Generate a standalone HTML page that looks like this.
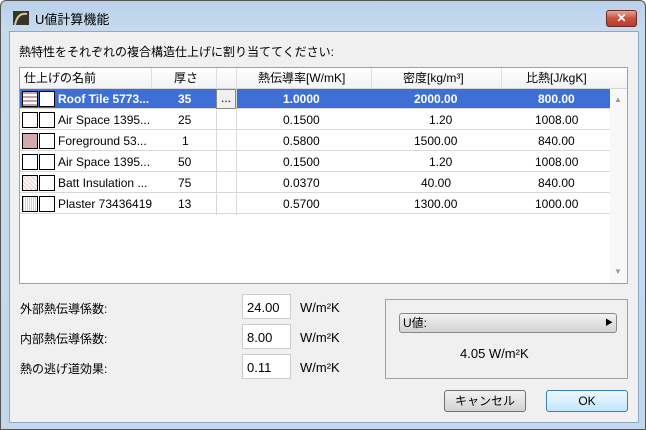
<!DOCTYPE html>
<html><head><meta charset="utf-8"><style>
*{margin:0;padding:0;box-sizing:border-box}
body{width:646px;height:430px;overflow:hidden;font-family:"Liberation Sans","Noto Sans CJK JP",sans-serif;font-size:12px;color:#000;background:#fff}
.win{position:absolute;left:0;top:0;width:646px;height:430px;background:linear-gradient(#b9d1ea,#c8daee 30px,#c3d7ec);border:1px solid #555;border-radius:6px 6px 0 0}
.client{position:absolute;left:8px;top:30px;width:630px;height:392px;background:#f0f0f0;border:1px solid #8ea9c6}
.abs{position:absolute}
.title{left:34px;top:8px;font-size:13px}
.close{left:605px;top:9px;width:31px;height:17px;border:1px solid #6b2b2b;border-radius:3px;background:linear-gradient(#e7a594,#c9523f 50%,#b83a28);color:#fff;font-weight:bold;text-align:center;line-height:15px;font-size:12px}
.tbl{left:18px;top:66px;width:609px;height:217px;border:1px solid #a0a0a0;background:#fff}
.row{position:absolute;left:0;width:590px;height:20px;border-bottom:1px solid #d8d8d8}
.c{position:absolute;top:0;height:20px;line-height:20px;white-space:nowrap}
.hdr{background:linear-gradient(#fff,#f2f3f5);height:21px;border-bottom:1px solid #d5d5d5}
.sel{background:#3e6fd6;color:#fff;font-weight:bold}
.sw{position:absolute;top:2px;width:16px;height:16px;border:1px solid #000;background:#fff}
.inp{position:absolute;left:241px;width:49px;height:25px;border:1px solid #ccc;background:#fff;padding-left:4px;line-height:25px;font-size:13px}
.btn{position:absolute;height:22px;border:1px solid #707070;border-radius:3px;background:linear-gradient(#f2f2f2,#e2e2e2 50%,#d3d3d3);text-align:center;line-height:20px}
</style></head><body>
<div class="win">
<svg class="abs" style="left:12px;top:10px" width="16" height="14"><rect width="16" height="14" fill="#3a3328"/><path d="M2 14 C4 4 9 2 14 3" stroke="#d8c8a0" stroke-width="2" fill="none"/></svg>
<div class="abs title">U値計算機能</div>
<div class="abs close">✕</div>
<div class="client"></div>
<div class="abs" style="left:18px;top:42px;font-size:12px">熱特性をそれぞれの複合構造仕上げに割り当ててください:</div>
<div class="abs tbl">
 <div class="row hdr" style="top:0;width:607px">
  <div class="c" style="left:4px">仕上げの名前</div>
  <div class="c" style="left:154px">厚さ</div>
  <div class="c" style="left:238px">熱伝導率[W/mK]</div>
  <div class="c" style="left:383px">密度[kg/m³]</div>
  <div class="c" style="left:506px">比熱[J/kgK]</div>
  <div class="abs" style="left:131px;top:0;height:20px;border-left:1px solid #e0e0e0"></div>
  <div class="abs" style="left:196px;top:0;height:20px;border-left:1px solid #e0e0e0"></div>
  <div class="abs" style="left:216px;top:0;height:20px;border-left:1px solid #e0e0e0"></div>
  <div class="abs" style="left:351px;top:0;height:20px;border-left:1px solid #e0e0e0"></div>
  <div class="abs" style="left:481px;top:0;height:20px;border-left:1px solid #e0e0e0"></div>
 </div>
 <div class="row sel" style="top:21px">
  <div class="sw" style="left:2px;background:repeating-linear-gradient(#c9a0a0 0 2px,#fff 2px 4px)"></div><div class="sw" style="left:19px"></div>
  <div class="c" style="left:38px">Roof Tile 5773...</div><div class="c" style="left:158px">35</div>
  <div class="abs" style="left:196px;top:0;width:20px;height:20px;background:#f0f0f0;border:1px solid #888;color:#000;text-align:center;line-height:16px;font-weight:normal">...</div>
  <div class="c" style="left:263px">1.0000</div><div class="c" style="left:394px">2000.00</div><div class="c" style="left:518px">800.00</div>
 </div>
 <div class="row" style="top:42px"><div class="sw" style="left:2px"></div><div class="sw" style="left:19px"></div><div class="c" style="left:38px">Air Space 1395...</div><div class="c" style="left:158px">25</div><div class="c" style="left:263px">0.1500</div><div class="c" style="left:409px">1.20</div><div class="c" style="left:515px">1008.00</div></div>
 <div class="row" style="top:63px"><div class="sw" style="left:2px;background:#d4a9a9"></div><div class="sw" style="left:19px"></div><div class="c" style="left:38px">Foreground 53...</div><div class="c" style="left:162px">1</div><div class="c" style="left:263px">0.5800</div><div class="c" style="left:394px">1500.00</div><div class="c" style="left:518px">840.00</div></div>
 <div class="row" style="top:84px"><div class="sw" style="left:2px"></div><div class="sw" style="left:19px"></div><div class="c" style="left:38px">Air Space 1395...</div><div class="c" style="left:158px">50</div><div class="c" style="left:263px">0.1500</div><div class="c" style="left:409px">1.20</div><div class="c" style="left:515px">1008.00</div></div>
 <div class="row" style="top:105px"><div class="sw" style="left:2px;background:repeating-linear-gradient(45deg,#e8c8c8 0 1px,#fff 1px 3px)"></div><div class="sw" style="left:19px"></div><div class="c" style="left:38px">Batt Insulation ...</div><div class="c" style="left:158px">75</div><div class="c" style="left:263px">0.0370</div><div class="c" style="left:401px">40.00</div><div class="c" style="left:518px">840.00</div></div>
 <div class="row" style="top:126px"><div class="sw" style="left:2px;background:repeating-linear-gradient(90deg,#e8c8c8 0 1px,#fff 1px 2px)"></div><div class="sw" style="left:19px"></div><div class="c" style="left:38px">Plaster 73436419</div><div class="c" style="left:158px">13</div><div class="c" style="left:263px">0.5700</div><div class="c" style="left:394px">1300.00</div><div class="c" style="left:515px">1000.00</div></div>
 <div class="abs" style="left:196px;top:42px;height:105px;border-left:1px solid #d8d8d8"></div>
 <div class="abs" style="left:216px;top:21px;height:126px;border-left:1px solid #d8d8d8"></div>
 <div class="abs" style="left:590px;top:21px;width:17px;height:194px;background:#f8f8f8"></div>
 <div class="abs" style="left:594px;top:27px;color:#999;font-size:8px">▲</div>
 <div class="abs" style="left:594px;top:199px;color:#999;font-size:8px">▼</div>
</div>
<div class="abs" style="left:19px;top:299px">外部熱伝導係数:</div>
<div class="abs" style="left:19px;top:329px">内部熱伝導係数:</div>
<div class="abs" style="left:19px;top:359px">熱の逃げ道効果:</div>
<div class="inp" style="top:293px">24.00</div>
<div class="inp" style="top:323px">8.00</div>
<div class="inp" style="top:353px">0.11</div>
<div class="abs" style="left:299px;top:299px;font-size:13px">W/m²K</div>
<div class="abs" style="left:299px;top:329px;font-size:13px">W/m²K</div>
<div class="abs" style="left:299px;top:359px;font-size:13px">W/m²K</div>
<div class="abs" style="left:384px;top:298px;width:243px;height:80px;border:1px solid #a0a0a0"></div>
<div class="btn" style="left:398px;top:312px;width:218px;height:20px;text-align:left;padding-left:3px;line-height:18px;border-color:#888">U値:<span style="position:absolute;right:3px;font-size:8px">▶</span></div>
<div class="abs" style="left:459px;top:345px;font-size:13px">4.05 W/m²K</div>
<div class="btn" style="left:443px;top:389px;width:82px">キャンセル</div>
<div class="btn" style="left:545px;top:389px;width:82px;border-color:#3c7fb1;background:linear-gradient(#eaf6fd,#d9f0fc 50%,#bee6fd)">OK</div>
</div>
</body></html>
